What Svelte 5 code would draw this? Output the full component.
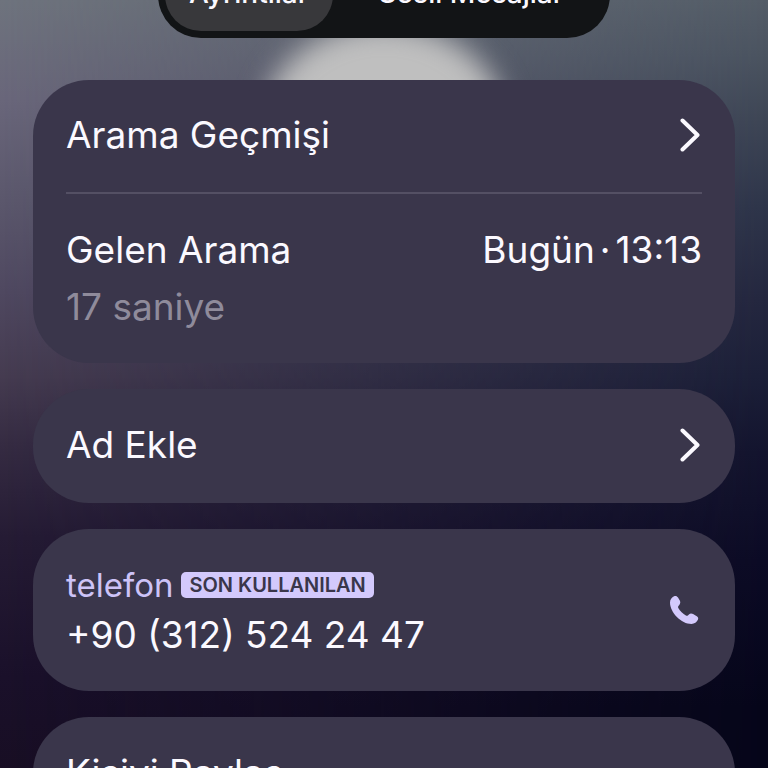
<script>
    let tab = "details";

    const tabs = [
        { id: "details", label: "Ayrıntılar" },
        { id: "voicemail", label: "Sesli Mesajlar" },
    ];
    const phone = "+90 (312) 524 24 47";
</script>

<div class="screen">
    <div class="glow"></div>

    <nav class="tabs">
        {#each tabs as item}
            <button
                class="tab"
                class:active={tab === item.id}
                on:click={() => (tab = item.id)}
            >
                {item.label}
            </button>
        {/each}
    </nav>

    <main class="cards">
        <section class="card">
            <button class="row link">
                <span>Arama Geçmişi</span>
                <svg class="chevron" viewBox="0 0 20 34" aria-hidden="true">
                    <path d="M2.500 2.500 L17.500 17 L2.500 31.500" />
                </svg>
            </button>
            <div class="call">
                <div class="line">
                    <span>Gelen Arama</span>
                    <span>Bugün<span class="dot">·</span>13:13</span>
                </div>
                <div class="duration">17 saniye</div>
            </div>
        </section>

        <section class="card">
            <button class="row">
                <span>Ad Ekle</span>
                <svg class="chevron" viewBox="0 0 20 34" aria-hidden="true">
                    <path d="M2.500 2.500 L17.500 17 L2.500 31.500" />
                </svg>
            </button>
        </section>

        <section class="card">
            <a class="phone" href={"tel:" + phone.replace(/[^+\d]/g, "")}>
                <div>
                    <div class="label">
                        <span>telefon</span>
                        <span class="badge">SON KULLANILAN</span>
                    </div>
                    <div class="number">{phone}</div>
                </div>
                <svg class="handset" viewBox="0 0 30 30" aria-hidden="true">
                    <path
                        d="M1 7.500 C1 4.500 3 1.800 5.600 1 C7 .6 8.200 1.200 9 2.500 L10.800 5.600 C11.600 7.200 11.400 8.600 10.300 9.900 L9.400 11 C8.900 11.700 8.900 12.400 9.300 13.100 C11 16 14 18.900 16.900 20.600 C17.600 21 18.300 20.900 18.900 20.400 L19.900 19.400 C21.100 18.400 22.500 18.200 24.100 19.100 L27.800 21.300 C29.200 22.200 29.500 23.300 29 24.600 C27.900 27.200 25.400 29 22.500 29 C12.400 29 1 17.600 1 7.500 Z"
                    />
                </svg>
            </a>
        </section>

        <section class="card">
            <button class="row">
                <span>Kişiyi Paylaş</span>
            </button>
        </section>
    </main>
</div>

<style>
    :global(body) {
        background: #06071a;
    }

    .screen {
        position: relative;
        height: 100vh;
        overflow: hidden;
        background: linear-gradient(
            #545d68 0%,
            #4b5461 7%,
            #3d4555 16%,
            #2e354a 27%,
            #24273f 39%,
            #1b1f38 49%,
            #13142e 59%,
            #0c0b25 73%,
            #06061a 92%
        );
        color: #fbf9ff;
        font-family: Inter, "Liberation Sans", sans-serif;
        font-size: 37px;
        line-height: 48px;
    }
    .screen::before {
        content: "";
        position: absolute;
        inset: 0;
        background: linear-gradient(
            #6e737d 0%,
            #69667a 13%,
            #5a566b 27%,
            #4f4860 38%,
            #453b50 49%,
            #352b42 58%,
            #251b34 70%,
            #1a102a 88%,
            #180e24 100%
        );
        mask-image: linear-gradient(to right, black, transparent);
    }

    .glow {
        position: absolute;
        top: 24px;
        left: calc(50% - 122px);
        width: 244px;
        height: 200px;
        border-radius: 50%;
        background: #bfbfbf;
        filter: blur(14px);
    }

    .tabs {
        position: relative;
        display: flex;
        gap: 22px;
        width: fit-content;
        min-width: 452px;
        box-sizing: border-box;
        margin: -48px auto 0;
        padding: 7px;
        border-radius: 44px;
        background: #121416;
    }
    .tab {
        padding: 10px 24px 14px;
        border-radius: 36px;
        font-size: 28px;
        font-weight: 500;
    }
    .tab.active {
        background: #38383b;
    }

    button {
        border: none;
        background: none;
        color: inherit;
        font: inherit;
        text-align: left;
        cursor: pointer;
    }

    .cards {
        position: relative;
        display: flex;
        flex-direction: column;
        gap: 26px;
        padding: 42px 33px;
    }
    .card {
        padding: 0 33px;
        border-radius: 56px;
        background: #3a364b;
    }

    .row {
        display: flex;
        align-items: center;
        justify-content: space-between;
        width: 100%;
        height: 114px;
        padding: 0 0 2px;
    }
    .link {
        border-bottom: 2px solid #545064;
    }

    .chevron {
        width: 20px;
        height: 34px;
        margin-right: 2px;
        fill: none;
        stroke: currentColor;
        stroke-width: 4;
        stroke-linecap: round;
        stroke-linejoin: round;
    }

    .call {
        padding: 32px 0;
    }
    .line {
        display: flex;
        justify-content: space-between;
    }
    .dot {
        margin: 0 5px;
    }
    .duration {
        margin-top: 9px;
        color: #8f8b9b;
    }

    .phone {
        display: flex;
        align-items: center;
        justify-content: space-between;
        padding: 32px 0;
        color: inherit;
        text-decoration: none;
    }
    .label {
        display: flex;
        align-items: center;
        gap: 8px;
        color: #cdc3f7;
        font-size: 33px;
    }
    .number {
        margin-top: 2px;
    }
    .badge {
        padding: 0 8px;
        border-radius: 5px;
        background: #d3c9fc;
        color: #3a364b;
        font-size: 20px;
        font-weight: 600;
        line-height: 26px;
    }
    .handset {
        width: 30px;
        height: 30px;
        margin-right: 3px;
        fill: #d3c9fc;
    }
</style>
